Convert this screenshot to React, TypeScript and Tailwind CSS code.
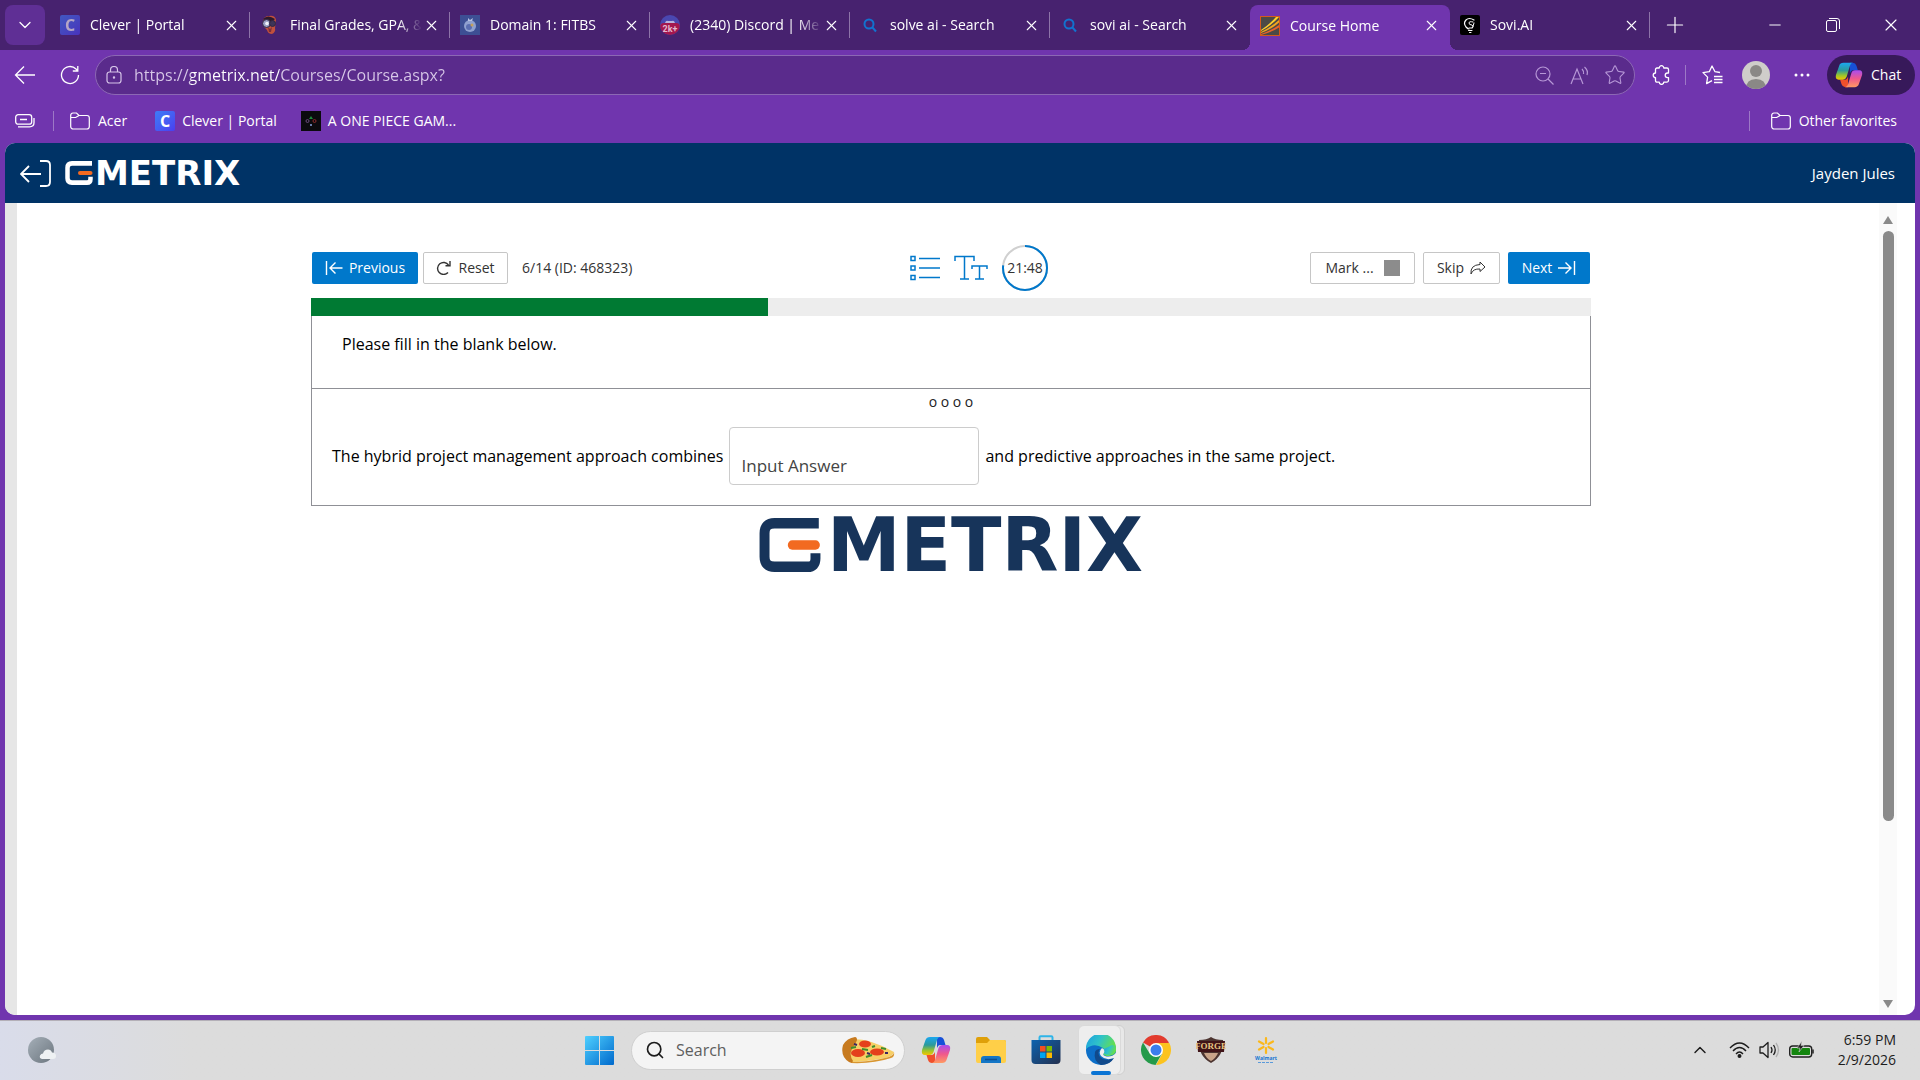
import type { ReactNode } from 'react';
import { ChevronDown, ChevronUp, Minus, Plus, Search, Star, X } from 'lucide-react';

const CleverIcon = () => (
  <span className="grid h-5 w-5 place-items-center rounded-xs bg-linear-to-br from-[#3d7cf6] to-[#4a3cf0] text-base leading-none font-bold text-white">
    C
  </span>
);

const OwlIcon = () => (
  <svg width="20" height="20" viewBox="0 0 20 20">
    <path d="M3 6Q4 1 9 1q6-1 7 4l-1 8q1 4-3 6-4 0-5-4-4-3-4-9z" fill="#c0503c" />
    <path d="M3 4q5-5 12 0l-2 2H5z" fill="#2c1a2c" />
    <circle cx="6.500" cy="8.500" r="4" fill="#9aa0c4" stroke="#2f2442" />
    <circle cx="12.500" cy="8.500" r="3" fill="#3c3558" stroke="#2f2442" />
    <circle cx="7" cy="8.500" r="1.800" fill="#f0f2fa" />
    <path d="M8 12l2 2 2-2-1 5H9z" fill="#7a2f3a" />
  </svg>
);

const DomainIcon = () => (
  <svg width="20" height="20" viewBox="0 0 20 20">
    <rect width="20" height="20" fill="#3d4f94" />
    <circle cx="10" cy="11" r="6" fill="#8fa0cf" />
    <circle cx="9" cy="12" r="3" fill="#5a6db0" />
    <path d="M8 3l2 2 3-2-1 3H8z" fill="#b9c3e3" />
    <circle cx="12" cy="10" r="1.500" fill="#c4a05c" />
  </svg>
);

const DiscordIcon = () => (
  <span className="relative block h-5 w-5 overflow-hidden rounded-full bg-[#4a47b0]">
    <svg className="absolute inset-0" width="20" height="20" viewBox="0 0 20 20">
      <path d="M5 8q1-3 3-2h4q2-1 3 2z" fill="#b9b2dc" />
    </svg>
    <span className="absolute inset-x-0 bottom-0 rounded-sm bg-[#a3174e] text-center font-['Roboto'] text-[9px] leading-3 font-bold text-[#e2b6cf]">
      2k+
    </span>
  </span>
);

const BingIcon = () => (
  <svg width="20" height="20" viewBox="0 0 20 20" fill="none" stroke="#1272cf" strokeWidth="2">
    <circle cx="9" cy="9" r="4.500" />
    <path d="M12 12l4 4.500" />
  </svg>
);

const CourseIcon = () => (
  <svg width="20" height="20" viewBox="0 0 20 20">
    <rect x=".5" y=".5" width="19" height="19" fill="#4b4a46" stroke="#d45a1c" />
    <path d="M1 14Q10 8 16 1h3Q12 9 1 15z" fill="#ffd02a" />
    <path d="M1 16Q11 11 19 4v2.500Q12 13 1 17z" fill="#f2a51f" />
    <path d="M1 18Q12 14 19 9v2.500Q12 16 1 19z" fill="#e8622a" />
  </svg>
);

const SoviIcon = () => (
  <svg width="20" height="20" viewBox="0 0 20 20" fill="none" stroke="#fff" strokeLinecap="round">
    <rect width="20" height="20" rx="2" fill="#000" stroke="none" />
    <path d="M14 5Q9 2 6 5t0 7q2 2 3 2" strokeWidth="1.200" />
    <path d="M13 7q-4-1-4 1t3 2q2 1 0 3H9M14 8l-1.500 5M8.500 15.500h3.500M9.500 17.500h1.500" />
  </svg>
);

const PieceIcon = () => (
  <svg width="20" height="20" viewBox="0 0 20 20" fill="none">
    <rect width="20" height="20" fill="#0b0a0e" />
    <path d="M10 5l2 3H8z" fill="#1f8a3c" />
    <circle cx="13.500" cy="10" r="1.500" stroke="#8c2a2a" />
    <circle cx="6.500" cy="10" r="1.500" stroke="#6a4a7c" />
    <rect x="9" y="13" width="2" height="2" fill="#6a7aa8" />
  </svg>
);

const FolderIcon = () => (
  <svg width="20" height="20" viewBox="0 0 20 20" fill="none" stroke="currentColor" strokeWidth="1.200">
    <path d="M.7 4.500A2.500 2.500 0 013 2h3.500L9 4.500h8a2.300 2.300 0 012.300 2.300v8.700a2.500 2.500 0 01-2.500 2.500H3.200A2.500 2.500 0 01.7 15.500zM.7 6.500h5L9 4.500" />
  </svg>
);

const CopilotIcon = ({ size, id }: { size: number; id: string }) => (
  <svg width={size} height={size} viewBox="0 0 30 30">
    <defs>
      <linearGradient id={`${id}-left`} x1="0" y1="0" x2="0" y2="1">
        <stop offset="0" stopColor="#1ba7f0" />
        <stop offset=".45" stopColor="#2c9a9a" />
        <stop offset=".75" stopColor="#9cc42c" />
        <stop offset="1" stopColor="#f2c500" />
      </linearGradient>
      <linearGradient id={`${id}-right`} x1="0" y1="0" x2="0" y2="1">
        <stop offset="0" stopColor="#a84df0" />
        <stop offset=".5" stopColor="#f0588c" />
        <stop offset="1" stopColor="#ff9a62" />
      </linearGradient>
    </defs>
    <path d="M16 2h3q3 0 4 3l1.500 5H19q-2 0-3 3z" fill="#1750d8" />
    <path d="M14 28h-3q-3 0-4-3l-1.500-5H11q2 0 3-3z" fill="#f0502c" />
    <path d="M9 2h10q-2 0-3 3l-3.500 12q-1 3-4 3H4q-4 0-3-5L4.500 5Q5.500 2 9 2z" fill={`url(#${id}-left)`} />
    <path d="M21 28H11q2 0 3-3l3.500-12q1-3 4-3H26q4 0 3 5l-3.500 10q-1 3-4.500 3z" fill={`url(#${id}-right)`} />
  </svg>
);

const tabs: { title: string; icon: ReactNode; active?: boolean; dim?: boolean }[] = [
  { title: 'Clever | Portal', icon: <CleverIcon />, dim: true },
  { title: 'Final Grades, GPA, &', icon: <OwlIcon /> },
  { title: 'Domain 1: FITBS', icon: <DomainIcon /> },
  { title: '(2340) Discord | Me', icon: <DiscordIcon /> },
  { title: 'solve ai - Search', icon: <BingIcon /> },
  { title: 'sovi ai - Search', icon: <BingIcon /> },
  { title: 'Course Home', icon: <CourseIcon />, active: true },
  { title: 'Sovi.AI', icon: <SoviIcon /> },
];

const TabStrip = () => (
  <div className="flex h-[50px] items-center bg-[#47226f] pl-[5px] text-white">
    <button aria-label="Tab actions" className="mr-[5px] grid h-10 w-10 shrink-0 place-items-center rounded-lg bg-[#5f2f95]">
      <ChevronDown size={20} strokeWidth={1.5} />
    </button>
    {tabs.map((tab, i) => (
      <div
        key={tab.title}
        className={
          tab.active
            ? 'relative mt-[5px] flex h-[45px] w-[200px] items-center rounded-t-lg bg-[#7035ae] pb-1 pl-[10px]'
            : 'flex h-[50px] w-[200px] items-center pl-[10px]'
        }
      >
        {tab.active && (
          <>
            <span className="absolute bottom-0 -left-2 h-2 w-2 bg-[radial-gradient(circle_at_0_0,transparent_8px,#7035ae_8px)]" />
            <span className="absolute -right-2 bottom-0 h-2 w-2 bg-[radial-gradient(circle_at_100%_0,transparent_8px,#7035ae_8px)]" />
          </>
        )}
        <span className={tab.dim ? 'shrink-0 opacity-60' : 'shrink-0'}>{tab.icon}</span>
        <button className="ml-[10px] w-[131px] text-left text-sm whitespace-nowrap [mask-image:linear-gradient(90deg,#000_108px,transparent_132px)]">
          {tab.title}
        </button>
        <button aria-label={`Close ${tab.title}`} className="grid w-5 shrink-0 place-items-center">
          <X size={17} strokeWidth={1.5} />
        </button>
        {i !== 5 && i !== 6 && <span className="ml-auto h-[26px] w-px bg-[#8d74a8]" />}
      </div>
    ))}
    <button aria-label="New tab" className="ml-[9px] grid h-8 w-8 place-items-center">
      <Plus size={26} strokeWidth={1.1} />
    </button>
    <div className="ml-auto flex">
      <button aria-label="Minimize" className="grid w-[58px] place-items-center">
        <Minus size={18} strokeWidth={1.3} />
      </button>
      <button aria-label="Restore" className="grid w-[58px] place-items-center">
        <svg width="14" height="14" viewBox="0 0 14 14" fill="none" stroke="currentColor">
          <rect x=".5" y="2.500" width="10" height="11" rx="1.500" />
          <path d="M3 .5h8q2.500 0 2.500 2.500v8" />
        </svg>
      </button>
      <button aria-label="Close window" className="grid w-[58px] place-items-center">
        <X size={20} strokeWidth={1.4} />
      </button>
    </div>
  </div>
);

const AddressRow = () => (
  <div className="flex h-[50px] items-center pr-[5px] pl-[6px] text-white">
    <button aria-label="Back" className="grid w-[38px] place-items-center">
      <svg width="22" height="20" viewBox="0 0 22 20" fill="none" stroke="currentColor" strokeWidth="1.300">
        <path d="M21 10H1.500M10 1.500L1.500 10l8.500 8.500" />
      </svg>
    </button>
    <button aria-label="Refresh" className="ml-[7px] grid w-[38px] place-items-center">
      <svg width="20" height="20" viewBox="0 0 20 20" fill="none" stroke="currentColor" strokeWidth="1.300">
        <path d="M18.500 10a8.500 8.500 0 11-2.500-6l1.500 1.500M17.800 1v5h-5" />
      </svg>
    </button>
    <div className="ml-[6px] flex h-10 flex-1 items-center rounded-full border border-[#8c68b4] bg-[#5a2b8c] pr-[2px] pl-[10px] text-[#b697d6]">
      <svg width="16" height="18" viewBox="0 0 16 18" fill="none" stroke="#d6c4e8" strokeWidth="1.200">
        <rect x="1" y="6" width="14" height="11" rx="2.500" />
        <path d="M4.500 6V4a3.500 3.500 0 017 0v2" />
        <circle cx="8" cy="11.500" r=".6" fill="#d6c4e8" />
      </svg>
      <input
        aria-label="Address"
        readOnly
        value="https://gmetrix.net/Courses/Course.aspx?"
        className="ml-3 flex-1 bg-[linear-gradient(90deg,#d8c8e8_57px,#fff_57px,#fff_145px,#d8c8e8_145px)] bg-clip-text text-base text-transparent outline-none"
      />
      <button aria-label="Zoom out" className="grid w-[35px] place-items-center">
        <svg width="19" height="19" viewBox="0 0 19 19" fill="none" stroke="currentColor" strokeWidth="1.200">
          <circle cx="8" cy="8" r="7" />
          <path d="M5 7.500h6M13 13l5.500 5.500" />
        </svg>
      </button>
      <button aria-label="Read aloud" className="grid w-[35px] place-items-center">
        <svg width="20" height="19" viewBox="0 0 20 19" fill="none" stroke="currentColor" strokeWidth="1.200">
          <path d="M1 18L7 3l6 15M3 13h8M12 3q2 2 1.500 5M14.500 1q4 3.500 2.500 8" />
        </svg>
      </button>
      <button aria-label="Add to favorites" className="grid w-[35px] place-items-center">
        <Star size={22} strokeWidth={1.2} />
      </button>
    </div>
    <button aria-label="Extensions" className="ml-2 grid w-9 place-items-center">
      <svg width="20" height="20" viewBox="0 0 20 20" fill="none" stroke="currentColor" strokeWidth="1.300" strokeLinejoin="round">
        <path d="M6 3h2.200a2.300 2.300 0 014.600 0H16q1.500 0 1.500 1.500V8h-1a2.300 2.300 0 000 4.600h1v3q0 1.500-1.500 1.500h-3.200a2.300 2.300 0 01-4.600 0H6q-1.500 0-1.500-1.500v-3a2.300 2.300 0 010-4.600V4.500Q4.500 3 6 3z" />
      </svg>
    </button>
    <span className="mx-[6px] h-5 w-px bg-[#9d78c6]" />
    <button aria-label="Favorites" className="ml-[2px] grid w-9 place-items-center">
      <svg width="21" height="20" viewBox="0 0 21 20" fill="none" stroke="currentColor" strokeWidth="1.300" strokeLinejoin="round">
        <path d="M18 7.500l-5-.8L10 1 7.300 6.700l-6.300.9 4.600 4.500-1 6.500 5.400-3M12 11.500h8.500M12 14.500h8.500M12 17.500h8.500" />
      </svg>
    </button>
    <button aria-label="Profile" className="ml-3 h-7 w-7 overflow-hidden rounded-full bg-[#cfcdca]">
      <svg width="28" height="28" viewBox="0 0 28 28" fill="#8a8886">
        <circle cx="14" cy="10" r="6" />
        <path d="M4 28q0-10 10-10t10 10z" />
      </svg>
    </button>
    <button aria-label="Settings and more" className="ml-3 grid w-10 place-items-center">
      <svg width="16" height="4" viewBox="0 0 16 4" fill="currentColor">
        <circle cx="2" cy="2" r="1.500" />
        <circle cx="8" cy="2" r="1.500" />
        <circle cx="14" cy="2" r="1.500" />
      </svg>
    </button>
    <button className="ml-[5px] flex h-10 w-[88px] items-center gap-2 rounded-full bg-[#37195a] pl-2 text-sm">
      <CopilotIcon size={28} id="chat" />
      Chat
    </button>
  </div>
);

const FavoritesBar = () => (
  <div className="flex h-[43px] items-center pr-[23px] pb-[2px] pl-[15px] text-sm text-white">
    <button aria-label="Tab groups">
      <svg width="20" height="14" viewBox="0 0 20 14" fill="none" stroke="currentColor" strokeWidth="1.300">
        <rect x=".7" y=".7" width="16" height="9.500" rx="2.500" />
        <path d="M5 5.500h7M3 12.800h11.500q4.500 0 4.500-4V4" />
      </svg>
    </button>
    <span className="ml-[18px] h-5 w-px bg-[#9d78c6]" />
    <a href="#acer" className="ml-4 flex items-center gap-2">
      <FolderIcon /> Acer
    </a>
    <a href="#clever" className="ml-7 flex items-center gap-[7px]">
      <CleverIcon /> Clever | Portal
    </a>
    <a href="#game" className="ml-6 flex items-center gap-[7px]">
      <PieceIcon /> A ONE PIECE GAM...
    </a>
    <span className="ml-auto h-5 w-px bg-[#9d78c6]" />
    <a href="#favorites" className="ml-[21px] flex items-center gap-2">
      <FolderIcon /> Other favorites
    </a>
  </div>
);

const Logo = ({ small = false }: { small?: boolean }) => (
  <div
    className={
      small
        ? "flex items-center gap-[2px] font-['DejaVu_Sans'] text-[34px] leading-none font-bold text-white"
        : "flex items-center gap-[6px] font-['DejaVu_Sans'] text-[74px] leading-none font-bold text-[#17345a]"
    }
  >
    <svg className={small ? 'h-[24px] w-[28px]' : 'h-[54px] w-[62px]'} viewBox="0 0 56 46" preserveAspectRatio="none" fill="none">
      <path d="M54 4.500H14Q5 4.500 5 13v20q0 8.500 9 8.500h30q7 0 7-7V30" stroke="currentColor" strokeWidth="9" />
      <rect x="26" y="19" width="29" height="8" rx="4" fill="#f26a21" />
    </svg>
    METRIX
  </div>
);

const SiteHeader = () => (
  <header className="flex h-[60px] items-center bg-[#003366] pr-5 pl-[15px] text-white">
    <button aria-label="Exit course" className="mr-[14px]">
      <svg width="31" height="27" viewBox="0 0 31 27" fill="none" stroke="currentColor" strokeWidth="1.800">
        <path d="M21 14H1M9 6l-8 8 8 8M20 1h6q4 0 4 4v17q0 4-4 4h-6" />
      </svg>
    </button>
    <Logo small />
    <span className="ml-auto text-[15px]">Jayden Jules</span>
  </header>
);

const Toolbar = () => (
  <div className="grid grid-cols-[1fr_auto_1fr] items-center text-sm text-[#333]">
    <div className="flex items-center">
      <button className="ml-px flex h-8 w-[106px] items-center justify-center gap-[6px] rounded-xs bg-[#0078cb] text-white">
        <svg width="18" height="14" viewBox="0 0 18 14" fill="none" stroke="currentColor" strokeWidth="1.400">
          <path d="M1.500 0v14M17.500 7H5M10.500 1.500L5 7l5.500 5.500" />
        </svg>
        Previous
      </button>
      <button className="ml-[5px] flex h-8 w-[85px] items-center justify-center gap-[6px] rounded-xs border border-[#c6c6c6]">
        <svg width="16" height="14" viewBox="0 0 16 14" fill="none" stroke="currentColor" strokeWidth="1.400">
          <path d="M12 11.500A6 6 0 1112.500 4M14 0v4.700H9.500" />
        </svg>
        Reset
      </button>
      <span className="ml-[14px]">6/14 (ID: 468323)</span>
    </div>
    <div className="flex items-center gap-[14px] pl-[56px] text-[#0078cb]">
      <button aria-label="Question list">
        <svg width="30" height="26" viewBox="0 0 30 26" fill="none" stroke="currentColor" strokeWidth="1.500">
          <path d="M9 3.500h21M9 13h21M9 22.500h21" />
          <rect x="1" y="1.500" width="4" height="4" />
          <rect x="1" y="11" width="4" height="4" />
          <rect x="1" y="20.500" width="4" height="4" />
        </svg>
      </button>
      <button aria-label="Text size">
        <svg width="34" height="26" viewBox="0 0 34 26" fill="none" stroke="currentColor" strokeWidth="1.500">
          <path d="M1 6V1.500h19V6M10.500 1.500v22.500M6 24h9M18 14v-3h15v3M25.500 11v13M21 24h9" />
        </svg>
      </button>
      <div className="relative grid h-[46px] w-[46px] place-items-center">
        <svg className="absolute inset-0 -rotate-90" width="46" height="46" viewBox="0 0 46 46" fill="none" strokeWidth="2">
          <circle cx="23" cy="23" r="22" stroke="#d0d0d0" />
          <circle cx="23" cy="23" r="22" stroke="#0078cb" pathLength="100" strokeDasharray="77 23" />
        </svg>
        <span className="text-[#333]">21:48</span>
      </div>
    </div>
    <div className="flex items-center justify-end gap-2 pr-px">
      <button className="flex h-8 w-[105px] items-center justify-center gap-[10px] rounded-xs border border-[#c6c6c6]">
        Mark ...
        <span className="h-4 w-4 bg-[#8c8c8c]" />
      </button>
      <button className="flex h-8 w-[77px] items-center justify-center gap-[6px] rounded-xs border border-[#c6c6c6]">
        Skip
        <svg width="16" height="14" viewBox="0 0 16 14" fill="none" stroke="currentColor">
          <path d="M1 13q-1-9 9-9.500V1l5 5-5 4.500V8Q3 7.500 1 13z" strokeLinejoin="round" />
        </svg>
      </button>
      <button className="flex h-8 w-[82px] items-center justify-center gap-[6px] rounded-xs bg-[#0078cb] text-white">
        Next
        <svg width="18" height="14" viewBox="0 0 18 14" fill="none" stroke="currentColor" strokeWidth="1.400">
          <path d="M16.500 0v14M0 7h13M7.500 1.500L13 7l-5.500 5.500" />
        </svg>
      </button>
    </div>
  </div>
);

const Question = () => (
  <main className="mx-auto w-full max-w-[1280px] pt-[42px]">
    <Toolbar />
    <div className="mt-[7px] h-[18px] bg-[#ededed]">
      <div className="h-full bg-[#007a33]" style={{ width: `${(5 / 14) * 100}%` }} />
    </div>
    <section className="border border-t-0 border-[#8f9096] text-base text-black">
      <p className="h-[73px] border-b border-[#8f9096] px-[30px] pt-4">Please fill in the blank below.</p>
      <p className="pt-[3px] text-center text-sm leading-5 text-[#222]">o o o o</p>
      <div className="flex items-center gap-[6px] px-5 pt-[15px] pb-5">
        <label htmlFor="answer">The hybrid project management approach combines</label>
        <input
          id="answer"
          placeholder="Input Answer"
          className="h-[58px] w-[250px] rounded-sm border border-[#ccc] pt-[18px] pl-[11px] text-[17px] outline-none placeholder:text-[#444]"
        />
        <span>and predictive approaches in the same project.</span>
      </div>
    </section>
    <div className="mt-[2px] flex justify-center">
      <Logo />
    </div>
  </main>
);

const Scrollbar = () => (
  <div className="flex w-[18px] shrink-0 flex-col items-center bg-[#fafafa] pt-[13px] pb-[7px]">
    <span className="h-2 w-[10px] bg-[#8a8a8a] [clip-path:polygon(50%_0,100%_100%,0_100%)]" />
    <span className="mt-[7px] h-[590px] w-[11px] rounded-full bg-[#8a8a8a]" />
    <span className="mt-auto h-2 w-[10px] bg-[#8a8a8a] [clip-path:polygon(0_0,100%_0,50%_100%)]" />
  </div>
);

const ExplorerIcon = () => (
  <svg width="30" height="30" viewBox="0 0 30 30">
    <path d="M0 4q0-2 2-2h9l3 3h14q2 0 2 2v8H0z" fill="#dfa009" />
    <path d="M0 8h11l3-3h14q2 0 2 2v19q0 2-2 2H2q-2 0-2-2z" fill="#ffcf48" />
    <path d="M5 28v-4q0-3 3-3h14q3 0 3 3v4z" fill="#1476c6" />
    <path d="M9 24.500h12" stroke="#0a4f93" strokeWidth="1.500" />
  </svg>
);

const StoreIcon = () => (
  <svg width="30" height="30" viewBox="0 0 30 30">
    <defs>
      <linearGradient id="store" x1="0" y1="0" x2="1" y2="1">
        <stop offset="0" stopColor="#0c63b0" />
        <stop offset="1" stopColor="#24304f" />
      </linearGradient>
    </defs>
    <path d="M8.500 8V2.500q0-1.200 1.200-1.200h10.600q1.200 0 1.200 1.200V8" fill="none" stroke="#2fb4e8" strokeWidth="2" />
    <path d="M.5 5h29v20q0 4-4 4h-21q-4 0-4-4z" fill="url(#store)" />
    <rect x="9" y="11" width="5.500" height="5.500" fill="#f25022" />
    <rect x="15.500" y="11" width="5.500" height="5.500" fill="#7fba00" />
    <rect x="9" y="17.500" width="5.500" height="5.500" fill="#00a4ef" />
    <rect x="15.500" y="17.500" width="5.500" height="5.500" fill="#ffb900" />
  </svg>
);

const EdgeIcon = () => (
  <svg width="30" height="30" viewBox="0 0 30 30">
    <defs>
      <linearGradient id="edge-top" x1="0" y1="0" x2="1" y2=".4">
        <stop offset="0" stopColor="#1b9de2" />
        <stop offset=".5" stopColor="#2fc3c8" />
        <stop offset="1" stopColor="#66e04a" />
      </linearGradient>
    </defs>
    <circle cx="15" cy="15" r="15" fill="#0d6fc8" />
    <path d="M0 14A15 15 0 0130 13q1 7-7 8-5 0-6-2 3-3 0-6Q8 7 0 14z" fill="url(#edge-top)" />
    <path d="M9 17q-2 9 6 13 9 0 13-7-9 4-14-1-3-4 0-8-4 0-5 3z" fill="#114a8b" />
    <path d="M28 23q-8 3-13-2-3-4 1-8 4 2 2 5-2 2 1 3 6 2 11-3l2 3z" fill="#eee" />
    <path d="M19 19q6 3 10-2l1-4q-1-3-4-3l-8 4q1 3 0 4z" fill="url(#edge-top)" />
  </svg>
);

const ChromeIcon = () => (
  <svg width="30" height="30" viewBox="0 0 30 30">
    <path d="M15 15L2 7.500A15 15 0 0128 7.500z" fill="#e23b2e" />
    <path d="M15 8h13.300A15 15 0 0115 30l6.500-11.500z" fill="#fcc31e" />
    <path d="M2 7.500L9 19l6 3-.5 8A15 15 0 012 7.500z" fill="#249a4a" />
    <path d="M21 18.500L14.500 30 10 22z" fill="#249a4a" />
    <circle cx="15" cy="15" r="7" fill="#fff" />
    <circle cx="15" cy="15" r="5.500" fill="#3b7ded" />
  </svg>
);

const ForgeIcon = () => (
  <svg width="30" height="30" viewBox="0 0 30 30">
    <path d="M3 5q8 0 12-3 4 3 12 3 1 16-12 23Q2 21 3 5z" fill="#4c3430" />
    <path d="M8 18h14q-2 5-7 8-5-3-7-8z" fill="#c9a489" />
    <path d="M1 6h28l-1 11H2z" fill="#401418" />
    <text x="15" y="14" textAnchor="middle" fontFamily="Liberation Serif" fontSize="9" fontWeight="bold" fill="#e6c582">
      FORGE
    </text>
  </svg>
);

const WalmartIcon = () => (
  <svg width="30" height="30" viewBox="0 0 30 30">
    <path d="M15 3v5M15 13v5M8 6.500l4.500 2.500M17.500 12l4.500 2.500M22 6.500L17.500 9M12.500 12L8 14.500" stroke="#fbb81c" strokeWidth="2.200" strokeLinecap="round" />
    <text x="15" y="25" textAnchor="middle" fontFamily="Open Sans" fontSize="5" fontWeight="bold" fill="#1273d2">
      Walmart
    </text>
    <path d="M7 27.500h16" stroke="#5a9ada" strokeDasharray="3 1" />
  </svg>
);

const PizzaIcon = () => (
  <svg width="54" height="28" viewBox="0 0 54 28">
    <path d="M9 3q20-1 44 13-1 4-9 6-20 4-34 4z" fill="#f7cf67" />
    <path d="M10 26q18 0 34-4 9-2 9-6 1 5-3 6-18 6-40 5z" fill="#d9962f" />
    <path d="M14 1Q6 2 2 9-1 20 8 26q3 2 4-1-4-6-1-12 4-5 5-9 0-3-2-3z" fill="#c77a1f" />
    <g fill="#e4401c">
      <ellipse cx="24" cy="8" rx="6" ry="3.500" />
      <ellipse cx="17" cy="17" rx="7" ry="4" />
      <ellipse cx="36" cy="16" rx="7" ry="3.500" />
    </g>
    <path d="M10 12l5-1M21 13l6 1M25 21l6-2M40 12l5 1M31 11l3-1" stroke="#3f8e2c" strokeWidth="2" />
    <path d="M13 8l3 1M26 17l3 1M44 17l3 0" stroke="#3b2560" strokeWidth="2" />
  </svg>
);

const taskbarApps = [
  { name: 'Copilot', icon: <CopilotIcon size={30} id="taskbar" /> },
  { name: 'File Explorer', icon: <ExplorerIcon /> },
  { name: 'Microsoft Store', icon: <StoreIcon /> },
  { name: 'Edge', icon: <EdgeIcon />, active: true },
  { name: 'Chrome', icon: <ChromeIcon /> },
  { name: 'Forge of Empires', icon: <ForgeIcon /> },
  { name: 'Walmart', icon: <WalmartIcon /> },
];

const Taskbar = () => (
  <footer className="grid h-[60px] grid-cols-[1fr_auto_1fr] items-center border-t border-[#b4b0b8] bg-linear-to-r from-[#d9dcea] via-[#dcdcdc] via-10% to-[#dcdcdc] pb-px text-[#1c1c1c]">
    <button aria-label="Weather" className="ml-7 w-7">
      <svg width="28" height="28" viewBox="0 0 28 28">
        <defs>
          <linearGradient id="moon" x1="0" y1="0" x2="1" y2="1">
            <stop offset="0" stopColor="#a5afb8" />
            <stop offset="1" stopColor="#6b757e" />
          </linearGradient>
        </defs>
        <circle cx="13" cy="14" r="13" fill="url(#moon)" />
        <path d="M14 23q-3-1-2-3.500 1-2 3-2 1-4 5-4 3 0 4 3 4 0 4 3.500 0 3-3 3z" fill="#eef1f3" />
      </svg>
    </button>
    <div className="mr-[55px] flex items-center">
      <button aria-label="Start" className="grid w-[55px] place-items-center">
        <svg width="29" height="29" viewBox="0 0 29 29">
          <defs>
            <linearGradient id="start" x1="0" y1="0" x2="29" y2="29" gradientUnits="userSpaceOnUse">
              <stop offset="0" stopColor="#4fd0ff" />
              <stop offset="1" stopColor="#0069cc" />
            </linearGradient>
          </defs>
          <path d="M0 1q0-1 1-1h13v14H0zM15 0h13q1 0 1 1v13H15zM0 15h14v14H1q-1 0-1-1zM15 15h14v13q0 1-1 1H15z" fill="url(#start)" />
        </svg>
      </button>
      <label className="mr-[3px] ml-[4px] flex h-[39px] w-[274px] items-center rounded-full border border-[#cfcfcf] bg-[#f4f4f4] pr-[9px] pl-[13px]">
        <Search size={20} strokeWidth={2} />
        <input placeholder="Search" aria-label="Search" className="ml-[11px] w-0 flex-1 text-base outline-none placeholder:text-[#5e5e5e]" />
        <PizzaIcon />
      </label>
      {taskbarApps.map((app) => (
        <button key={app.name} aria-label={app.name} className="relative grid h-[50px] w-[55px] place-items-center">
          {app.active && (
            <>
              <span className="absolute inset-y-0 right-[3px] w-10 rounded-md border border-[#d0d0d0] bg-[#e8e8e8]" />
              <span className="absolute inset-y-0 left-[5px] w-[43px] rounded-md border border-[#dadada] bg-[#eee]" />
              <span className="absolute bottom-0 h-1 w-5 rounded-full bg-[#0a74d4]" />
            </>
          )}
          <span className="relative">{app.icon}</span>
        </button>
      ))}
    </div>
    <div className="flex items-center justify-end pr-6">
      <button aria-label="Show hidden icons" className="mr-[19px]">
        <ChevronUp size={20} strokeWidth={1.7} />
      </button>
      <button aria-label="Network" className="mr-[9px]">
        <svg width="21" height="16" viewBox="0 0 21 16" fill="none" stroke="currentColor" strokeWidth="1.400">
          <path d="M1 6q9.500-10 19 0M4 9q6.500-7 13 0M7 12q3.500-4 7 0" />
          <circle cx="10.500" cy="14" r="1.300" fill="currentColor" />
        </svg>
      </button>
      <button aria-label="Volume" className="mr-[9px]">
        <svg width="21" height="18" viewBox="0 0 21 18" fill="none" stroke="currentColor" strokeWidth="1.300" strokeLinejoin="round">
          <path d="M1 6h3l5-4.500v15L4 12H1zM12 6q2 3 0 6M14.500 4q3.500 5 0 10" />
          <path d="M17 2q5 7 0 14" stroke="#b0b0b0" />
        </svg>
      </button>
      <button aria-label="Battery" className="mr-6">
        <svg width="25" height="18" viewBox="0 0 25 18">
          <rect x=".7" y="5" width="22" height="11" rx="3" fill="none" stroke="#222" strokeWidth="1.400" />
          <rect x="2.500" y="7" width="18.500" height="7" rx="1" fill="#14860f" />
          <path d="M24 8.500v4" stroke="#222" strokeWidth="1.500" />
          <path d="M13 0L8 7h3l-1 4 5-6.500h-3z" fill="#222" stroke="#dcdcdc" strokeWidth=".6" />
        </svg>
      </button>
      <div className="text-right text-sm leading-5">
        <p>6:59 PM</p>
        <p>2/9/2026</p>
      </div>
    </div>
  </footer>
);

const App = () => {
  return (
    <div className="flex min-h-screen flex-col bg-[#7035ae] font-['Open_Sans',sans-serif]">
      <TabStrip />
      <AddressRow />
      <FavoritesBar />
      <div className="mx-[5px] mb-[5px] flex flex-1 flex-col overflow-hidden rounded-[10px] bg-white">
        <SiteHeader />
        <div className="flex flex-1 border-l-12 border-[#e6e6e6] pr-[18px]">
          <div className="flex-1 pl-[6px]">
            <Question />
          </div>
          <Scrollbar />
        </div>
      </div>
      <Taskbar />
    </div>
  );
};

export default App;
